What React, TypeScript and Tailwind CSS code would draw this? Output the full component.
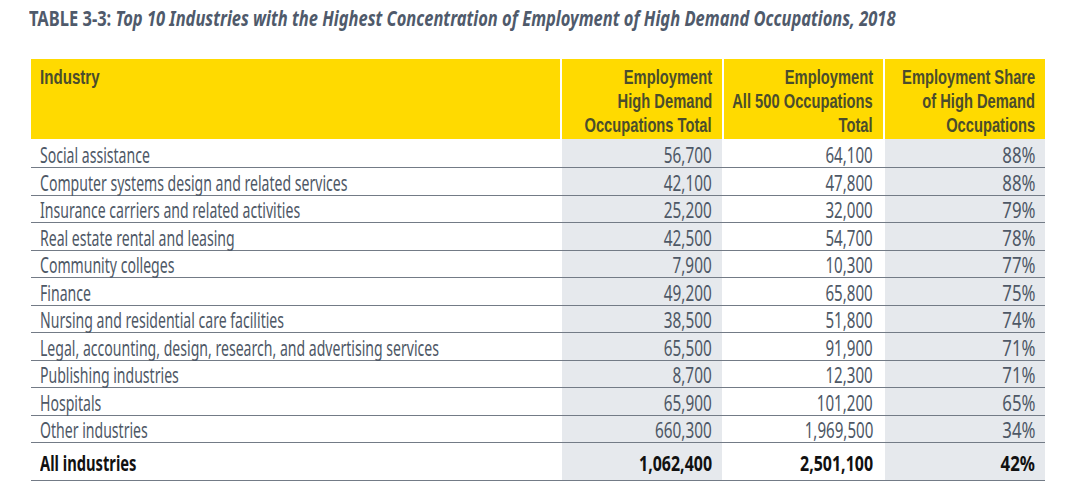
const font = '[font-family:"Noto_Sans","Open_Sans",sans-serif]';
const headFont = '[font-family:"Liberation_Sans",Arial,sans-serif]';

type Row = { industry: string; high: string; all: string; share: string };

const rows: Row[] = [
  { industry: 'Social assistance', high: '56,700', all: '64,100', share: '88%' },
  { industry: 'Computer systems design and related services', high: '42,100', all: '47,800', share: '88%' },
  { industry: 'Insurance carriers and related activities', high: '25,200', all: '32,000', share: '79%' },
  { industry: 'Real estate rental and leasing', high: '42,500', all: '54,700', share: '78%' },
  { industry: 'Community colleges', high: '7,900', all: '10,300', share: '77%' },
  { industry: 'Finance', high: '49,200', all: '65,800', share: '75%' },
  { industry: 'Nursing and residential care facilities', high: '38,500', all: '51,800', share: '74%' },
  { industry: 'Legal, accounting, design, research, and advertising services', high: '65,500', all: '91,900', share: '71%' },
  { industry: 'Publishing industries', high: '8,700', all: '12,300', share: '71%' },
  { industry: 'Hospitals', high: '65,900', all: '101,200', share: '65%' },
  { industry: 'Other industries', high: '660,300', all: '1,969,500', share: '34%' },
];

const grid = 'grid grid-cols-[529px_160px_159px_160px] gap-x-[2px]';

// the source face is a condensed sans; squeeze the installed face to its width
function Narrow({ children, right, k }: { children: React.ReactNode; right?: boolean; k: string }) {
  return (
    <span className={`inline-block whitespace-nowrap ${k} ${right ? 'origin-right' : 'origin-left'}`}>
      {children}
    </span>
  );
}

function HeadCell({ lines }: { lines: string[] }) {
  return (
    <div className="bg-[#ffda00] pr-[10px] pt-[6px] flex flex-col items-end">
      {lines.map(l => (
        <Narrow key={l} right k="scale-x-[0.7]">{l}</Narrow>
      ))}
    </div>
  );
}

export default function App() {
  return (
    <div className={`w-[1080px] h-[496px] overflow-hidden bg-white ${font} text-[#4e5866]`}>
      <h1 className="pl-[29px] pt-[6px] h-[59px] text-[21px] leading-[24px] font-bold text-[#4f5a6b]">
        <Narrow k="scale-x-[0.785]">
          TABLE 3-3: <span className="italic">Top 10 Industries with the Highest Concentration of Employment of High Demand Occupations, 2018</span>
        </Narrow>
      </h1>

      <div className="ml-[31px] w-[1014px]">
        <div className={`${grid} h-[80px] ${headFont} text-[21px] leading-[24px] font-bold text-[#4b4d2c]`}>
          <div className="bg-[#ffda00] pl-[9px] pt-[6px]">
            <Narrow k="scale-x-[0.72]">Industry</Narrow>
          </div>
          <HeadCell lines={['Employment', 'High Demand', 'Occupations Total']} />
          <HeadCell lines={['Employment', 'All 500 Occupations', 'Total']} />
          <HeadCell lines={['Employment Share', 'of High Demand', 'Occupations']} />
        </div>

        {rows.map((r, i) => {
          const pad = i === 0 ? 'pt-[4px]' : 'pt-[2.5px]';
          return (
            <div
              key={r.industry}
              className={`${grid} border-b-[1.5px] border-[#737b86] text-[21px] leading-[24px] ${i === 0 ? 'h-[29px]' : 'h-[27.5px]'}`}
            >
              <div className={`pl-[9px] ${pad}`}>
                <Narrow k="scale-x-[0.67]">{r.industry}</Narrow>
              </div>
              <div className={`bg-[#e6e9ed] pr-[10px] flex justify-end ${pad}`}>
                <Narrow right k="scale-x-[0.73]">{r.high}</Narrow>
              </div>
              <div className={`pr-[10px] flex justify-end ${pad}`}>
                <Narrow right k="scale-x-[0.72]">{r.all}</Narrow>
              </div>
              <div className={`bg-[#e6e9ed] pr-[10px] flex justify-end ${pad}`}>
                <Narrow right k="scale-x-[0.8]">{r.share}</Narrow>
              </div>
            </div>
          );
        })}

        <div className={`${grid} h-[37.5px] border-b-[1.5px] border-[#737b86] text-[21px] leading-[24px] font-bold text-[#111111]`}>
          <div className="pl-[9px] pt-[8px]">
            <Narrow k="scale-x-[0.7]">All industries</Narrow>
          </div>
          <div className="bg-[#e6e9ed] pr-[10px] pt-[8px] flex justify-end">
            <Narrow right k="scale-x-[0.76]">1,062,400</Narrow>
          </div>
          <div className="pr-[10px] pt-[8px] flex justify-end">
            <Narrow right k="scale-x-[0.76]">2,501,100</Narrow>
          </div>
          <div className="bg-[#e6e9ed] pr-[10px] pt-[8px] flex justify-end">
            <Narrow right k="scale-x-[0.8]">42%</Narrow>
          </div>
        </div>
      </div>
    </div>
  );
}
